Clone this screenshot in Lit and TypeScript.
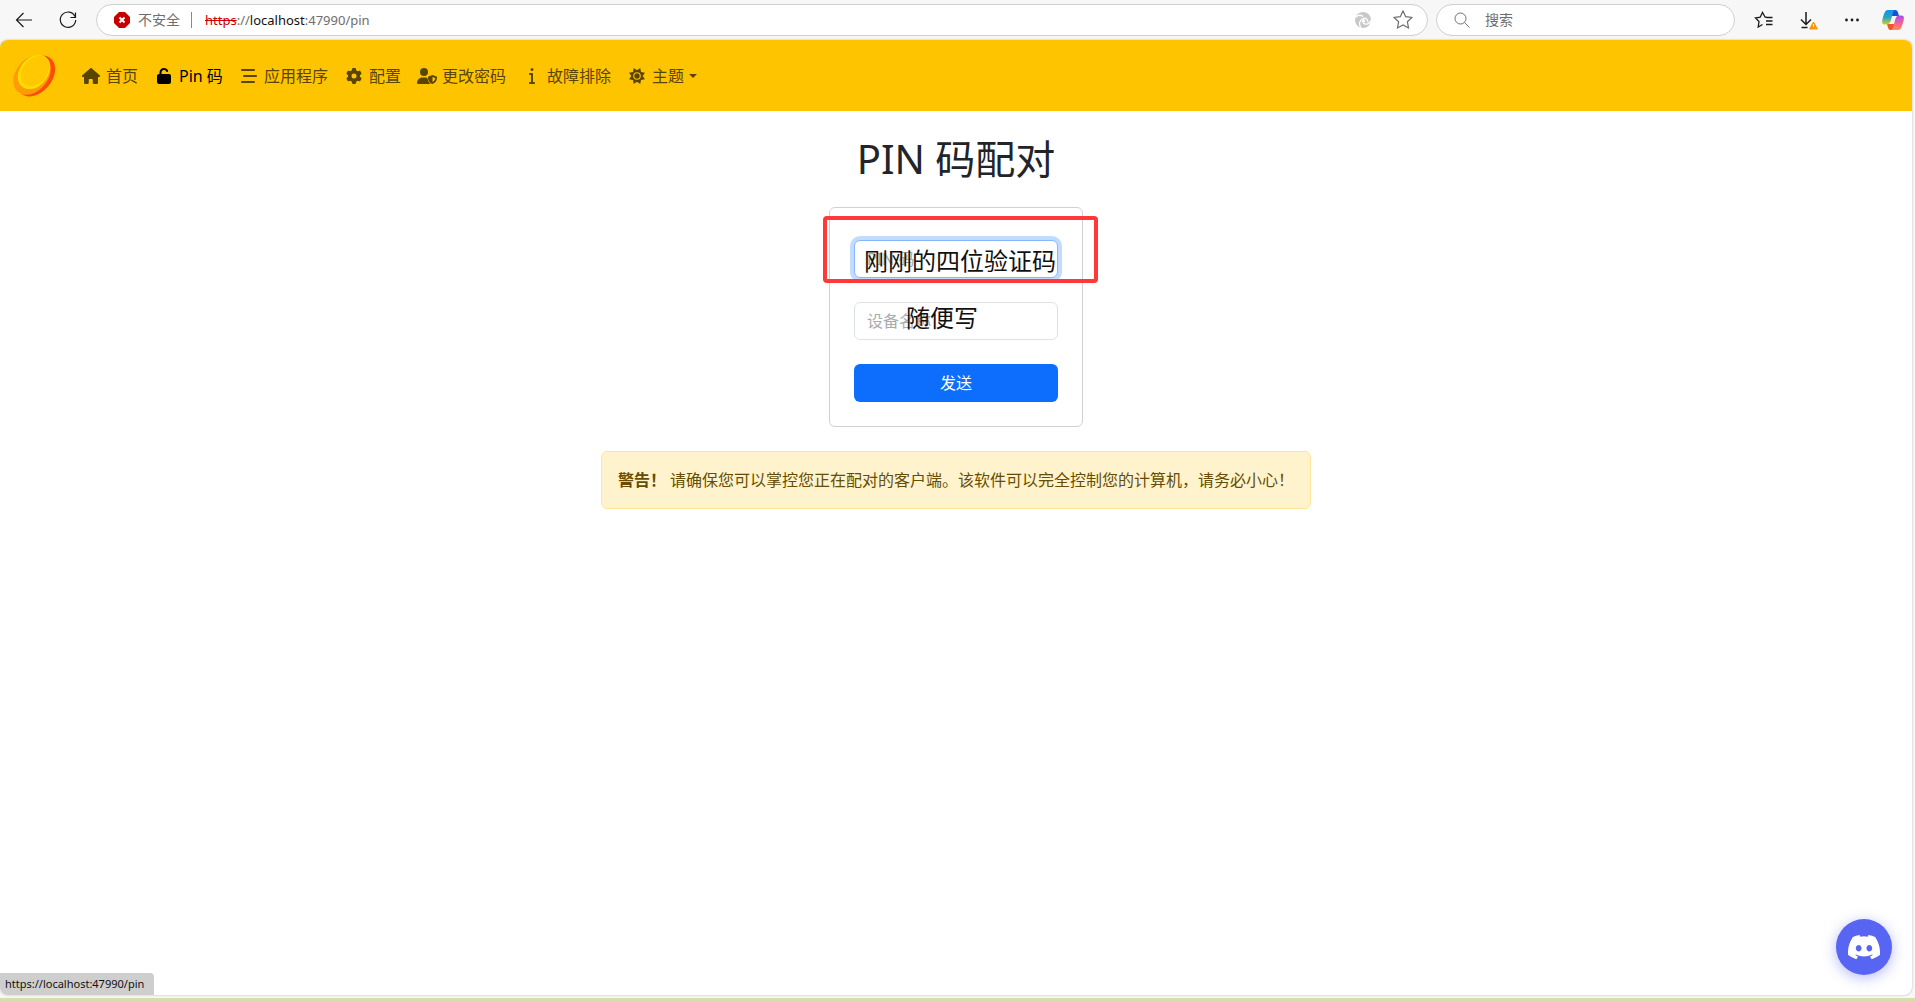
import { LitElement, html, css, svg } from "lit";
import { customElement } from "lit/decorators.js";

const icon = (box: string, body: unknown, cls = "") =>
  html`<svg class="icon ${cls}" viewBox=${box} aria-hidden="true">${body}</svg>`;

const house = svg`<path d="M575.8 255.500c0 18-15 32.100-32 32.100l-32 0 .7 160.200c0 2.700-.2 5.400-.5 8.100l0 16.200c0 22.100-17.900 40-40 40l-88 0c-22.100 0-40-17.900-40-40l0-88c0-17.700-14.300-32-32-32l-64 0c-17.700 0-32 14.300-32 32l0 88c0 22.100-17.900 40-40 40l-72 0c-22.100 0-40-17.900-40-40l0-184.600-32 0c-18 0-32-14-32-32.100 0-9 3-17 10-24L266.400 8c7-7 15-8 22-8s15 2 21 7L564.800 231.500c8 7 12 15 11 24z"/>`;
const unlock = svg`<path d="M144 144c0-44.200 35.800-80 80-80 31.900 0 59.400 18.600 72.300 45.700 7.600 16 26.700 22.800 42.600 15.200s22.800-26.700 15.200-42.600C331 33.700 281.500 0 224 0 144.500 0 80 64.500 80 144l0 48-16 0c-35.300 0-64 28.700-64 64L0 448c0 35.300 28.700 64 64 64l320 0c35.300 0 64-28.700 64-64l0-192c0-35.300-28.700-64-64-64l-240 0 0-48z"/>`;
const bars = svg`<path fill="none" stroke="currentColor" stroke-width="66" stroke-linecap="round" d="M32 64h384M96 256h384M32 448h384"/>`;
const gear = svg`<path fill-rule="evenodd" d="M495.900 166.600c3.200 8.700.5 18.400-6.400 24.600l-43.300 39.400c1.100 8.300 1.700 16.800 1.700 25.400s-.6 17.100-1.700 25.400l43.300 39.400c6.900 6.200 9.600 15.900 6.400 24.600-4.400 11.900-9.700 23.300-15.800 34.300l-4.700 8.100c-6.600 11-14 21.400-22.100 31.200-5.900 7.200-15.700 9.600-24.500 6.800l-55.700-17.700c-13.400 10.300-28.200 18.900-44 25.400l-12.500 57.100c-2 9.100-9 16.300-18.200 17.800-13.800 2.300-28 3.500-42.500 3.500s-28.700-1.200-42.500-3.500c-9.200-1.500-16.200-8.700-18.200-17.800l-12.500-57.100c-15.800-6.500-30.600-15.100-44-25.400L83.100 425.900c-8.800 2.800-18.600.3-24.500-6.800-8.100-9.800-15.500-20.200-22.100-31.200l-4.700-8.100c-6.100-11-11.400-22.400-15.800-34.300-3.200-8.700-.5-18.400 6.400-24.600l43.300-39.400C64.600 273.100 64 264.600 64 256s.6-17.100 1.700-25.400L22.400 191.200c-6.900-6.200-9.600-15.900-6.400-24.600 4.400-11.900 9.700-23.300 15.800-34.300l4.700-8.100c6.600-11 14-21.400 22.100-31.200 5.900-7.200 15.700-9.600 24.500-6.800l55.700 17.700c13.400-10.300 28.200-18.900 44-25.400l12.500-57.100c2-9.100 9-16.300 18.200-17.800C227.300 1.200 241.500 0 256 0s28.700 1.200 42.500 3.500c9.200 1.500 16.200 8.700 18.200 17.800l12.500 57.100c15.800 6.500 30.600 15.100 44 25.400l55.700-17.700c8.800-2.800 18.600-.3 24.500 6.800 8.100 9.800 15.500 20.200 22.100 31.200l4.700 8.100c6.100 11 11.400 22.400 15.800 34.300zM256 336a80 80 0 1 0 0-160 80 80 0 1 0 0 160z"/>`;
const userShield = svg`<path d="M224 256A128 128 0 1 0 224 0a128 128 0 1 0 0 256zM178 304C80 304 0 383 0 482c0 17 13 30 30 30h389c7 0 14-2 19-6-50-31-93-91-100-174l-3-12c-18-10-40-16-65-16z"/><path fill-rule="evenodd" d="M496 225l128 49c10 4 16 13 16 24 1 85-27 169-144 214-117-45-145-129-144-214 0-11 6-20 16-24zM496 285v166c61-31 84-82 86-132z"/>`;
const info = svg`<path d="M48 48a48 48 0 1 1 96 0 48 48 0 1 1-96 0zM0 192c0-17.700 14.300-32 32-32l64 0c17.700 0 32 14.300 32 32l0 256 32 0c17.700 0 32 14.300 32 32s-14.300 32-32 32L32 512c-17.700 0-32-14.300-32-32s14.300-32 32-32l32 0 0-224-32 0c-17.700 0-32-14.300-32-32z"/>`;
const sun = svg`<path fill-rule="evenodd" d="M256 70L361 2l23 126 126 23-72 105 72 105-126 23-23 126-105-68-105 68-23-126L2 361l72-105L2 151l126-23L151 2zM256 134a122 122 0 1 0 0 244 122 122 0 1 0 0-244z"/><circle cx="256" cy="256" r="86"/>`;

const coin = svg`
  <ellipse cx="24" cy="22" rx="23" ry="16" fill="#ff4b0a" transform="rotate(-50 24 22)"/>
  <ellipse cx="20" cy="21" rx="22" ry="16" fill="#ff9a08" transform="rotate(-50 20 21)"/>
  <ellipse cx="22" cy="18" rx="19" ry="14" fill="#ffdc00" transform="rotate(-50 22 18)"/>
  <ellipse cx="23" cy="17" rx="17" ry="12" fill="#ffc800" transform="rotate(-50 23 17)"/>`;

const star = "M12 3l2.700 5.700 6.200.8-4.500 4.300 1.100 6.200-5.500-3-5.500 3 1.100-6.200-4.500-4.300 6.200-.8z";

const links = [
  { label: "首页", box: "0 0 576 512", art: house },
  { label: "Pin 码", box: "0 0 448 512", art: unlock, active: true },
  { label: "应用程序", box: "0 0 512 512", art: bars },
  { label: "配置", box: "0 0 512 512", art: gear },
  { label: "更改密码", box: "0 0 640 512", art: userShield },
  { label: "故障排除", box: "0 0 192 512", art: info },
];

@customElement("browser-bar")
class BrowserBar extends LitElement {
  static styles = css`
    :host { display: block; }
    * { box-sizing: border-box; }
    .bar { display: flex; align-items: center; height: 40px; background: #f7f7f7; }
    button { display: grid; place-items: center; padding: 0; border: 0; background: none; color: #1b1b1b; flex: none; width: 44px; height: 32px; }
    .back { width: 48px; }
    .reload { width: 40px; margin-right: 8px; }
    .icon { display: block; width: 20px; height: 20px; fill: none; stroke: currentColor; }
    .icon.small { width: 16px; height: 16px; }
    .address, .search { display: flex; align-items: center; height: 32px; border: 1px solid #cfcfcf; border-radius: 16px; background: #fff; font-size: 14px; color: #6e6e6e; }
    .address { flex: 1; min-width: 0; padding: 0 4px 0 17px; }
    .bad { width: 16px; height: 16px; margin-right: 8px; }
    .sep { width: 1px; height: 16px; background: #8a8a8a; margin: 0 13px 0 11px; }
    .url { flex: 1; white-space: nowrap; font-size: 13px; }
    .scheme { color: #c00; text-decoration: line-through; }
    .host { color: #111; }
    .address button { width: 40px; color: #6e6e6e; }
    .address .swirl { color: #c8c8c8; }
    .search { width: 299px; margin-left: 8px; padding: 0 16px; gap: 14px; }
    .search input { flex: 1; min-width: 0; border: 0; outline: 0; padding: 0; background: none; font: inherit; color: #333; }
    .search input::placeholder { color: #6e6e6e; opacity: 1; }
    .search .icon { width: 18px; height: 18px; }
    .tools { display: flex; padding: 0 3px 0 7px; }
    .tools .copilot { width: 38px; }
  `;
  render() {
    return html`<header class="bar">
      <button class="back" aria-label="后退">${icon("0 0 20 20", svg`<path stroke-width="1.200" d="M18 10H2.500M9.500 3l-7 7 7 7"/>`)}</button>
      <button class="reload" aria-label="刷新">${icon("0 0 20 20", svg`<path stroke-width="1.200" d="M17 6.500A7.700 7.700 0 1 0 17.700 10M17.500 2.500v5h-5"/>`)}</button>
      <div class="address">
        <svg class="bad" viewBox="0 0 16 16" aria-hidden="true"><path fill="#c80000" d="M5 0h6l5 5v6l-5 5H5l-5-5V5z"/><path d="M5.500 5.500l5 5m0-5l-5 5" stroke="#fff" stroke-width="2"/></svg>
        <span>不安全</span><span class="sep"></span>
        <span class="url"><span class="scheme">https</span>://<span class="host">localhost</span>:47990/pin</span>
        <button class="swirl" aria-label="扩展">${icon("0 0 16 16", svg`<circle cx="8" cy="8" r="8" fill="currentColor" stroke="none"/><g stroke="#fff" stroke-width="1.300"><path d="M0 5.500C3 2.500 6 3 8 4.500"/><path d="M6 16C3.500 12 4.500 8 8 6.500c3-1 5 1 5 4"/><path d="M16 8.500c-1 3-5 5-8 2.500"/></g><circle cx="8.500" cy="9" r="1.800" fill="#fff" stroke="none"/>`, "small")}</button>
        <button aria-label="收藏">${icon("2 2 20 20", svg`<path stroke-width="1.200" d=${star}/>`)}</button>
      </div>
      <label class="search">${icon("0 0 18 18", svg`<circle cx="7.500" cy="7.500" r="5.500"/><path d="M11.500 11.500l5 5"/>`)}<input type="text" placeholder="搜索" aria-label="搜索" /></label>
      <div class="tools">
        <button aria-label="收藏夹">${icon("0 0 20 20", svg`<path stroke-width="1.300" d="M13 7.500L11 7 8.500 2.500 6.200 7.200 1.500 8l3.500 3.500L4.200 17l4.300-2.500M13 7.500h5.500M12 11h6.500M12 14.500h6.500"/>`)}</button>
        <button aria-label="下载">${icon("0 0 20 20", svg`<path stroke-width="1.500" d="M8 2v12M3 9.500l5 5 5-5M3.500 17.500h6"/><path d="M15.500 12l4 7h-8z" fill="#f59b0b" stroke="#f59b0b"/><path stroke="#fff" d="M15.500 14v3"/>`)}</button>
        <button aria-label="更多">${icon("0 0 20 20", svg`<g fill="currentColor" stroke="none"><circle cx="4.500" cy="10" r="1.400"/><circle cx="10" cy="10" r="1.400"/><circle cx="15.500" cy="10" r="1.400"/></g>`)}</button>
        <button class="copilot" aria-label="Copilot"><svg width="22" height="20" viewBox="0 0 22 20" aria-hidden="true">
          <defs><linearGradient id="a" x1="0" y1="0" x2="0" y2="1"><stop offset="0" stop-color="#1590f0"/><stop offset=".5" stop-color="#22a5c8"/><stop offset="1" stop-color="#d6d21c"/></linearGradient>
          <linearGradient id="b" x1="0" y1="0" x2="0" y2="1"><stop offset="0" stop-color="#a44df0"/><stop offset=".5" stop-color="#f2609a"/><stop offset="1" stop-color="#ff9050"/></linearGradient></defs>
          <path fill="#1550d8" d="M9 0h4.500c2 0 2.500 2 3.500 6h-7z"/><path fill="#f0562a" d="M5 14h7l1 6H8.500c-2 0-2.500-2-3.500-6z"/>
          <path fill="url(#a)" d="M6 0h7c-1.500.5-2.300 3-3.500 8-1 4-2 6.500-4.500 6.500H2.500c-3 0-2.700-3-1.700-6.500C2.300 3 3 0 6 0z"/>
          <path fill="url(#b)" d="M16 20H9c1.500-.5 2.300-3 3.500-8 1-4 2-6.500 4.500-6.500h2.500c3 0 2.700 3 1.700 6.500-1.500 5-2.200 8-5.200 8z"/></svg></button>
      </div>
    </header>`;
  }
}

@customElement("site-nav")
class SiteNav extends LitElement {
  static styles = css`
    :host { display: block; }
    .nav { display: flex; align-items: center; height: 71px; background: #ffc400; border-radius: 8px 8px 0 0; padding: 0 12px; }
    .brand { display: block; width: 44px; height: 44px; margin-right: 17px; }
    .brand svg { display: block; width: 100%; height: 100%; overflow: visible; }
    ul { display: flex; list-style: none; margin: 0; padding: 0; }
    .link { display: flex; align-items: center; gap: 5px; padding: 8px; line-height: 24px; color: #594500; text-decoration: none; font: inherit; border: 0; background: none; }
    .active { color: #000; }
    .icon { width: 20px; height: 16px; fill: currentColor; }
    .caret { border: 4px solid transparent; border-top-color: currentColor; border-bottom: 0; }
  `;
  render() {
    return html`<nav class="nav">
      <a class="brand" href="#" aria-label="Sunshine"><svg viewBox="0 0 44 44" aria-hidden="true">${coin}</svg></a>
      <ul>
        ${links.map((l) => html`<li><a href="#" class="link ${l.active ? "active" : ""}">${icon(l.box, l.art)}<span>${l.label}</span></a></li>`)}
        <li><button class="link">${icon("0 0 512 512", sun)}<span>主题</span><span class="caret"></span></button></li>
      </ul>
    </nav>`;
  }
}

@customElement("app-root")
class AppRoot extends LitElement {
  static styles = css`
    :host { display: block; font-family: "Noto Sans", "Noto Sans CJK SC", sans-serif; font-size: 16px; line-height: 24px; color: #212529; }
    * { box-sizing: border-box; }
    .window { display: flex; flex-direction: column; min-height: 100vh; background: #f7f7f7; border-bottom: 3px solid #d9dcae; }
    .page { position: relative; flex: 1; display: flex; flex-direction: column; background: #fff; margin: 0 3px 3px 0; border-radius: 8px; box-shadow: 0 0 2px #aaa; }
    main { display: flex; flex-direction: column; align-items: center; }
    h1 { margin: 24px 0; font-size: 40px; line-height: 48px; font-weight: 400; }
    .card { position: relative; width: 254px; padding: 32px 24px 24px; border: 1px solid #d0d1d2; border-radius: 6px; }
    .field { position: relative; margin-bottom: 24px; }
    input { display: block; width: 100%; height: 38px; padding: 6px 12px; border: 1px solid #dee2e6; border-radius: 6px; font: inherit; outline: 0; background: #fff; }
    input::placeholder { color: #a9abad; opacity: 1; }
    .focused { border-color: #86b7fe; box-shadow: 0 0 0 4px #c2dbff; }
    .note { position: absolute; font-size: 24px; line-height: 32px; color: #111; white-space: nowrap; pointer-events: none; }
    .note-pin { left: 10px; top: 5px; }
    .note-name { left: 52px; top: 0; }
    .frame { position: absolute; left: -7px; top: 8px; right: -16px; height: 67px; border: 4px solid #ff3838; border-radius: 4px; pointer-events: none; }
    .send { display: block; width: 100%; height: 38px; border: 0; border-radius: 6px; background: #0d6efd; color: #fff; font: inherit; }
    .alert { margin-top: 24px; padding: 16px; border: 1px solid #ffe69c; border-radius: 6px; background: #fff3cd; color: #664d03; }
    .alert b { margin-right: 4px; }
    .discord { position: absolute; right: 20px; bottom: 20px; display: grid; place-items: center; width: 56px; height: 56px; border: 0; border-radius: 50%; background: #5865f2; box-shadow: 0 3px 14px #5865f270; padding: 0; }
    .discord svg { width: 32px; height: 26px; fill: #fff; }
    .status { position: absolute; left: 0; bottom: 0; padding: 0 10px 0 5px; font-size: 11px; line-height: 22px; background: #cecece; color: #111; border-radius: 0 4px 0 8px; }
  `;
  render() {
    return html`<div class="window">
      <browser-bar></browser-bar>
      <div class="page">
        <site-nav></site-nav>
        <main>
          <h1>PIN 码配对</h1>
          <form class="card" @submit=${(e: Event) => e.preventDefault()}>
            <div class="field"><input class="focused" type="text" placeholder="PIN 码" aria-label="PIN 码" /><span class="note note-pin">刚刚的四位验证码</span></div>
            <div class="field"><input type="text" placeholder="设备名称" aria-label="设备名称" /><span class="note note-name">随便写</span></div>
            <button class="send">发送</button>
            <span class="frame"></span>
          </form>
          <div class="alert" role="alert"><b>警告！</b>请确保您可以掌控您正在配对的客户端。该软件可以完全控制您的计算机，请务必小心！</div>
        </main>
        <button class="discord" aria-label="Discord"><svg viewBox="0 0 127 96" aria-hidden="true"><path d="M107.700 8.070A105.150 105.150 0 0 0 81.470 0a72.060 72.060 0 0 0-3.360 6.830 97.680 97.680 0 0 0-29.110 0A72.370 72.370 0 0 0 45.640 0a105.890 105.890 0 0 0-26.250 8.090C2.790 32.650-1.710 56.600.54 80.210a105.730 105.730 0 0 0 32.170 16.150 77.700 77.700 0 0 0 6.890-11.110 68.420 68.420 0 0 1-10.850-5.180c.91-.66 1.800-1.340 2.660-2a75.570 75.570 0 0 0 64.320 0c.87.710 1.760 1.390 2.660 2a68.680 68.680 0 0 1-10.870 5.190 77 77 0 0 0 6.890 11.100 105.250 105.250 0 0 0 32.190-16.140c2.640-27.380-4.510-51.110-18.900-72.150zM42.450 65.690C36.180 65.690 31 60 31 53s5-12.740 11.430-12.740S54 46 53.890 53s-5.050 12.690-11.440 12.690zm42.240 0C78.410 65.690 73.250 60 73.250 53s5-12.740 11.440-12.740S96.230 46 96.120 53s-5.040 12.690-11.430 12.690z"/></svg></button>
        <div class="status">https://localhost:47990/pin</div>
      </div>
    </div>`;
  }
}
